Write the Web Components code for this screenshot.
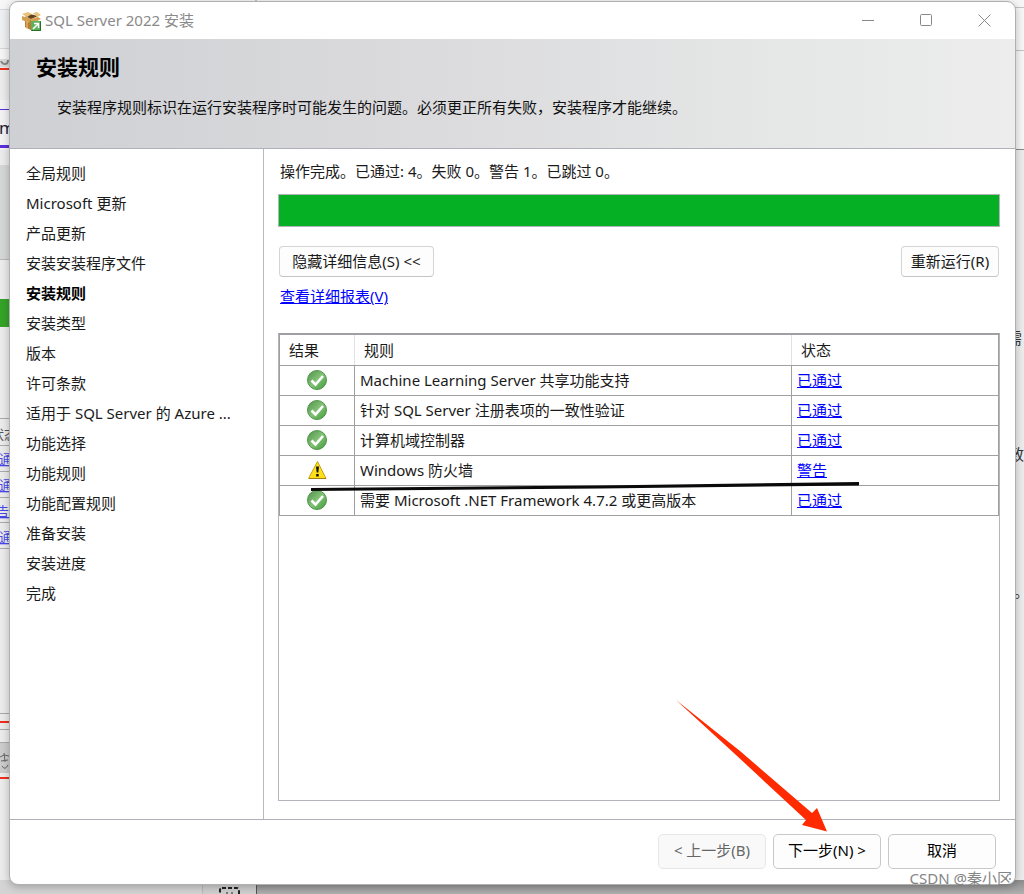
<!DOCTYPE html>
<html lang="zh-CN">
<head>
<meta charset="utf-8">
<title>SQL Server 2022 安装</title>
<style>
    body {
        margin: 0;
        font-family: "Noto Sans", "Noto Sans CJK SC", sans-serif;
        font-size: 15px;
        line-height: 20px;
        color: #1a1a1a;
        background: #ececec;
    }
</style>
</head>
<body>
<setup-desktop>
    <setup-window caption="SQL Server 2022 安装">
        <setup-header slot="header" heading="安装规则">安装程序规则标识在运行安装程序时可能发生的问题。必须更正所有失败，安装程序才能继续。</setup-header>
        <setup-steps slot="steps" current="4"></setup-steps>
        <rule-results></rule-results>
        <setup-button slot="footer" size="large" disabled>&lt; 上一步(B)</setup-button>
        <setup-button slot="footer" size="large" strong>下一步(N) &gt;</setup-button>
        <setup-button slot="footer" size="large" strong>取消</setup-button>
    </setup-window>
    <mark-layer slot="marks"></mark-layer>
</setup-desktop>

<script>
const STEPS = [
    '全局规则', 'Microsoft 更新', '产品更新', '安装安装程序文件', '安装规则',
    '安装类型', '版本', '许可条款', '适用于 SQL Server 的 Azure ...', '功能选择',
    '功能规则', '功能配置规则', '准备安装', '安装进度', '完成'
];

const RULES = [
    { name: 'Machine Learning Server 共享功能支持', ok: true },
    { name: '针对 SQL Server 注册表项的一致性验证', ok: true },
    { name: '计算机域控制器', ok: true },
    { name: 'Windows 防火墙', ok: false },
    { name: '需要 Microsoft .NET Framework 4.7.2 或更高版本', ok: true }
];

// Desktop with the edges of the windows behind
class SetupDesktop extends HTMLElement {
    static css = `
    :host {
        display: flex;
        position: relative;
        box-sizing: border-box;
        min-height: 100vh;
        padding: 1px 8px 9px 9px;
        overflow: hidden;
    }
    .behind {
        position: absolute;
        inset: 0;
        width: 100%;
        height: 100%;
    }
    ::slotted(setup-window) {
        flex: 1;
    }
    `;
    constructor() {
        super();
        const shadow = this.attachShadow({ mode: 'open' });
        shadow.innerHTML = `<style>${SetupDesktop.css}</style>
        <svg class="behind" aria-hidden="true">
            <defs>
                <linearGradient id="dim" x1="0" x2="0" y1="0" y2="1">
                    <stop offset="0" stop-color="#8c8c8c"/><stop offset="1" stop-color="#b0b0b0"/>
                </linearGradient>
            </defs>
            <rect width="10" height="48" fill="#eff0f1"/>
            <rect width="1024" height="9" fill="#f7f7f7"/>
            <path d="M256 0v3" stroke="#888"/>
            <path d="M0 9.500h10M0 48.500h10" stroke="#d5d6d8"/>
            <rect y="49" width="10" height="18" fill="#f6f6f6"/>
            <rect y="59" width="10" height="8" fill="#dcdcdc"/>
            <path d="M1 61q1 3 4 3t3-4" stroke="#888" stroke-width="2" fill="none"/>
            <rect y="68" width="10" height="2" fill="#f03020"/>
            <rect y="100" width="10" height="50" fill="#f3f3f6"/>
            <rect y="109" width="10" height="1" fill="#5a30d8"/>
            <rect y="145" width="10" height="3" fill="#5a30d8"/>
            <rect y="165" width="10" height="94" fill="#d5d8d6"/>
            <path d="M0 259.500h10" stroke="#b8b8b8"/>
            <rect y="299" width="10" height="28" fill="#35a328"/>
            <path d="M0 418.500h10M0 445.500h10M0 471.500h10M0 497.500h10M0 522.500h10M0 548.500h10M0 713.500h10M0 729.500h10M0 742.500h10" stroke="#aaa"/>
            <rect y="721" width="10" height="2" fill="#ee3020"/>
            <rect y="743" width="10" height="30" fill="#ccc"/>
            <rect y="777" width="10" height="2" fill="#ee3020"/>
            <path d="M0 757l4-2 5 1M1 761l7-1M4 753l1 9M2 766q3 5 6-1" stroke="#666" fill="none"/>
            <rect y="880" width="203" height="14" fill="#d4d4d4"/>
            <rect x="203" y="880" width="53" height="14" fill="#d0d0d0"/>
            <path d="M202.500 880v14" stroke="#bbb"/>
            <rect x="256" y="880" width="768" height="14" fill="url(#dim)"/>
            <path d="M256.500 880v14" stroke="#555"/>
            <rect x="220" y="888" width="19" height="16" rx="2" fill="none" stroke="#222" stroke-width="2" stroke-dasharray="4 2"/>
            <path d="M226 893h2M231 893h2" stroke="#222"/>
            <rect x="1014" width="10" height="149" fill="#f7f7f7"/>
            <rect x="1014" y="149" width="10" height="731" fill="#ededed"/>
            <path d="M1014 7.500h10M1014 50.500h10" stroke="#c4c4c4"/>
            <path d="M1014 149.500h10" stroke="#8a8a8a"/>
            <g font-size="13" fill="#555">
                <text x="-1" y="134" font-size="17" fill="#223">m</text>
                <text x="-9" y="439">状态</text>
                <g fill="#4848e8">
                    <text x="-1" y="464" text-decoration="underline">通</text>
                    <text x="-1" y="490" text-decoration="underline">通</text>
                    <text x="-4" y="516" text-decoration="underline">告</text>
                    <text x="-1" y="542" text-decoration="underline">通</text>
                </g>
                <g font-size="15" fill="#333">
                    <text x="1007" y="344">需</text>
                    <text x="1009" y="460">致</text>
                    <text x="1014" y="597">。</text>
                </g>
            </g>
        </svg>
        <slot></slot><slot name="marks"></slot>`;
    }
}

class SetupWindow extends HTMLElement {
    static css = `
    :host {
        display: flex;
        flex-direction: column;
        position: relative;
        min-width: 0;
        box-sizing: border-box;
        border: 1px solid #b0b0b0;
        border-radius: 9px;
        background: #fff;
        overflow: hidden;
        box-shadow: 0 2px 8px rgba(0, 0, 0, 0.25);
    }
    .bar {
        display: flex;
        align-items: center;
        height: 37px;
        padding: 0 2px 0 12px;
        color: #8a8a8a;
    }
    .bar svg {
        display: block;
    }
    .bar span {
        flex: 1;
        padding: 0 0 2px 4px;
    }
    .bar button {
        display: flex;
        align-items: center;
        justify-content: center;
        width: 58px;
        height: 37px;
        padding: 0;
        border: 0;
        background: none;
    }
    .main {
        flex: 1;
        display: flex;
        border-top: 1px solid #b0b0b8;
        border-bottom: 1px solid #b0b0b8;
    }
    aside {
        flex: none;
        width: 254px;
        box-sizing: border-box;
        border-right: 1px solid #b8b8c0;
    }
    main {
        flex: 1;
        display: flex;
        min-width: 0;
    }
    ::slotted(rule-results) {
        flex: 1;
    }
    footer {
        display: flex;
        justify-content: flex-end;
        gap: 7px;
        padding: 14px 19px 15px;
    }
    `;
    constructor() {
        super();
        const shadow = this.attachShadow({ mode: 'open' });
        shadow.innerHTML = `<style>${SetupWindow.css}</style>
        <div class="bar">
            <svg width="19" height="20" viewBox="0 0 19 20" aria-hidden="true">
                <path d="M3 6l6 2 7-2v10l-7 3-6-3z" fill="#dda84c"/>
                <path d="M3 6l6 2v11l-6-3z" fill="#bd7c2c"/>
                <path d="M3 5l5-2 8 2-7 3z" fill="#65431c"/>
                <path d="M0 3l6-2 4 2-5 3zM11 2l4-1 4 3-4 2z" fill="#e6c27a"/>
                <path d="M0 5l3 1 6 2-2 4-7-3zM9 8l7-2 3 2-6 3z" fill="#d3a052"/>
                <path d="M5 10v8" stroke="#e9c98c"/>
                <rect x="9" y="10" width="10" height="10" fill="#5fb05c"/>
                <path d="M9.500 19.500h9v-9" stroke="#226f25" fill="none"/>
                <path d="M11 18l5-5M12 12.500h4.500v4.500" stroke="#fff" stroke-width="1.500" fill="none"/>
            </svg>
            <span></span>
            <button aria-label="最小化"><svg width="13" height="13"><path d="M0 6.500h12" stroke="#888"/></svg></button>
            <button aria-label="最大化"><svg width="13" height="13"><rect x=".5" y=".5" width="11" height="11" rx="1" fill="none" stroke="#888"/></svg></button>
            <button aria-label="关闭"><svg width="13" height="13"><path d="M.5 .5l12 12M12.500 .5l-12 12" stroke="#888"/></svg></button>
        </div>
        <slot name="header"></slot>
        <div class="main">
            <aside><slot name="steps"></slot></aside>
            <main><slot></slot></main>
        </div>
        <footer><slot name="footer"></slot></footer>`;
        shadow.querySelector('.bar span').textContent = this.getAttribute('caption') || '';
    }
}

class SetupHeader extends HTMLElement {
    static css = `
    :host {
        display: block;
        padding: 14px 26px 31px;
        background: linear-gradient(90deg, #cfd0d4, #dcdcde 45%, #e5e6e6 75%, #ededed);
        color: #111;
    }
    h1 {
        margin: 0;
        font-size: 21px;
        line-height: 28px;
        font-weight: 700;
        color: #000;
    }
    p {
        margin: 16px 0 0;
        padding-left: 21px;
    }
    `;
    constructor() {
        super();
        const shadow = this.attachShadow({ mode: 'open' });
        shadow.innerHTML = `<style>${SetupHeader.css}</style><h1></h1><p><slot></slot></p>`;
        shadow.querySelector('h1').textContent = this.getAttribute('heading') || '';
    }
}

class SetupSteps extends HTMLElement {
    static css = `
    :host {
        display: block;
        padding: 9px 16px;
    }
    ol {
        margin: 0;
        padding: 0;
        list-style: none;
        line-height: 30px;
        white-space: nowrap;
    }
    .current {
        font-weight: 700;
        color: #000;
    }
    `;
    constructor() {
        super();
        const shadow = this.attachShadow({ mode: 'open' });
        const current = Number(this.getAttribute('current'));
        const items = STEPS.map((step, index) =>
            index === current ? `<li class="current" aria-current="step">${step}</li>` : `<li>${step}</li>`
        ).join('');
        shadow.innerHTML = `<style>${SetupSteps.css}</style><ol>${items}</ol>`;
    }
}

class SetupButton extends HTMLElement {
    static css = `
    :host {
        display: block;
    }
    button {
        height: 31px;
        min-width: 98px;
        padding: 0 7px 2px;
        border: 1px solid #d4d4d4;
        border-bottom-color: #c4c4c4;
        border-radius: 4px;
        background: #fdfdfd;
        color: #1a1a1a;
        font: inherit;
        white-space: nowrap;
    }
    :host([size=wide]) button {
        width: 155px;
    }
    :host([size=large]) button {
        width: 108px;
        height: 35px;
        padding: 0 0 4px;
        border-radius: 5px;
    }
    :host([strong]) button {
        border-color: #c8c8c8;
        color: #000;
    }
    button:disabled {
        border-color: #e6e6e6;
        background: #f9f9f9;
        color: #666;
    }
    `;
    constructor() {
        super();
        const shadow = this.attachShadow({ mode: 'open' });
        shadow.innerHTML = `<style>${SetupButton.css}</style><button type="button"><slot></slot></button>`;
        shadow.querySelector('button').disabled = this.hasAttribute('disabled');
    }
}

class ResultIcon extends HTMLElement {
    static css = `
    :host, svg {
        display: block;
    }
    svg {
        margin: 0 auto;
    }
    `;
    static ok = `
    <svg width="20" height="20" viewBox="0 0 20 20" role="img" aria-label="已通过">
        <defs><linearGradient id="g" x1="0" y1="0" x2="1" y2="1">
            <stop offset="0" stop-color="#4f9048"/><stop offset=".5" stop-color="#83c277"/><stop offset="1" stop-color="#3f9a38"/>
        </linearGradient></defs>
        <circle cx="10" cy="10" r="9.500" fill="url(#g)" stroke="#50944a"/>
        <path d="M4.500 10.500l4 4 7.500-8.500" stroke="#fff" stroke-width="2.600" fill="none"/>
    </svg>`;
    static warning = `
    <svg width="20" height="20" viewBox="0 0 20 20" role="img" aria-label="警告">
        <path d="M10.500 1.500L19 18.500H1.500z" fill="#ffe018" stroke="#c7a012" stroke-linejoin="round"/>
        <path d="M19 18.500H2" stroke="#a67c0c"/>
        <path d="M9 6.500h3l-.7 6h-1.600z" fill="#111"/>
        <rect x="9.200" y="14" width="2.500" height="2.500" fill="#111"/>
    </svg>`;
    constructor() {
        super();
        const shadow = this.attachShadow({ mode: 'open' });
        const svg = this.getAttribute('kind') === 'warning' ? ResultIcon.warning : ResultIcon.ok;
        shadow.innerHTML = `<style>${ResultIcon.css}</style>${svg}`;
    }
}

class RuleResults extends HTMLElement {
    static css = `
    :host {
        display: flex;
        flex-direction: column;
        min-width: 0;
        box-sizing: border-box;
        padding: 12px 15px 18px 14px;
    }
    a {
        color: #0000ff;
    }
    .status {
        margin: 0;
        padding-left: 2px;
    }
    .progress {
        height: 31px;
        margin-top: 13px;
        border: 1px solid #b4b4b8;
        background: #06b025;
    }
    .actions {
        display: flex;
        justify-content: space-between;
        margin-top: 19px;
        padding: 0 1px;
    }
    .report {
        margin-top: 9px;
        padding-left: 2px;
    }
    .grid {
        flex: 1;
        margin-top: 27px;
        border: 1px solid #b4b4bc;
        border-top: 2px solid #a0a0a4;
    }
    table {
        width: 100%;
        table-layout: fixed;
        border-collapse: collapse;
        border-right: 1px solid #a0a0a0;
    }
    th, td {
        box-sizing: border-box;
        height: 30px;
        padding: 0 5px;
        border-bottom: 1px solid #a0a0a0;
        border-left: 1px solid #a0a0a0;
        text-align: left;
        font-weight: 400;
        white-space: nowrap;
    }
    th {
        padding: 0 9px;
        border-left-color: #e2e2e2;
    }
    th:first-child {
        border-left-color: #a0a0a0;
    }
    td:first-child {
        padding: 0;
    }
    .icon {
        width: 75px;
    }
    .state {
        width: 207px;
    }
    `;
    constructor() {
        super();
        const shadow = this.attachShadow({ mode: 'open' });
        const rows = RULES.map(rule => `
            <tr>
                <td><result-icon kind="${rule.ok ? 'ok' : 'warning'}"></result-icon></td>
                <td>${rule.name}</td>
                <td><a href="#">${rule.ok ? '已通过' : '警告'}</a></td>
            </tr>`).join('');
        shadow.innerHTML = `<style>${RuleResults.css}</style>
        <p class="status">操作完成。已通过: 4。失败 0。警告 1。已跳过 0。</p>
        <div class="progress" role="progressbar" aria-label="进度" aria-valuenow="100"></div>
        <div class="actions">
            <setup-button size="wide">隐藏详细信息(S) &lt;&lt;</setup-button>
            <setup-button>重新运行(R)</setup-button>
        </div>
        <div class="report"><a href="#">查看详细报表(V)</a></div>
        <div class="grid">
            <table>
                <thead><tr><th class="icon">结果</th><th>规则</th><th class="state">状态</th></tr></thead>
                <tbody>${rows}</tbody>
            </table>
        </div>`;
    }
}

// Hand-drawn marks and the watermark, over the window
class MarkLayer extends HTMLElement {
    static css = `
    :host {
        position: absolute;
        inset: 0;
        pointer-events: none;
    }
    svg {
        position: absolute;
        width: 100%;
        height: 100%;
    }
    span {
        position: absolute;
        right: 12px;
        bottom: 6px;
        color: #858585;
    }
    `;
    constructor() {
        super();
        const shadow = this.attachShadow({ mode: 'open' });
        shadow.innerHTML = `<style>${MarkLayer.css}</style>
        <svg aria-hidden="true">
            <path d="M311 488L600 485.500 859 482v3.500L600 488.500 311 491z" fill="#0a0a0a"/>
            <path d="M676 700L740 751 812 813 817 808 827 831.500 802 825 806 820 736 755z" fill="#ff2a00"/>
            <path d="M1009 873h2v2h-2zM1009 878h2v2h-2zM1005 878h2v2h-2z" fill="#aaa"/>
        </svg>
        <span>CSDN @秦小区</span>`;
    }
}

customElements.define('setup-button', SetupButton);
customElements.define('result-icon', ResultIcon);
customElements.define('setup-header', SetupHeader);
customElements.define('setup-steps', SetupSteps);
customElements.define('rule-results', RuleResults);
customElements.define('setup-window', SetupWindow);
customElements.define('mark-layer', MarkLayer);
customElements.define('setup-desktop', SetupDesktop);
</script>
</body>
</html>
